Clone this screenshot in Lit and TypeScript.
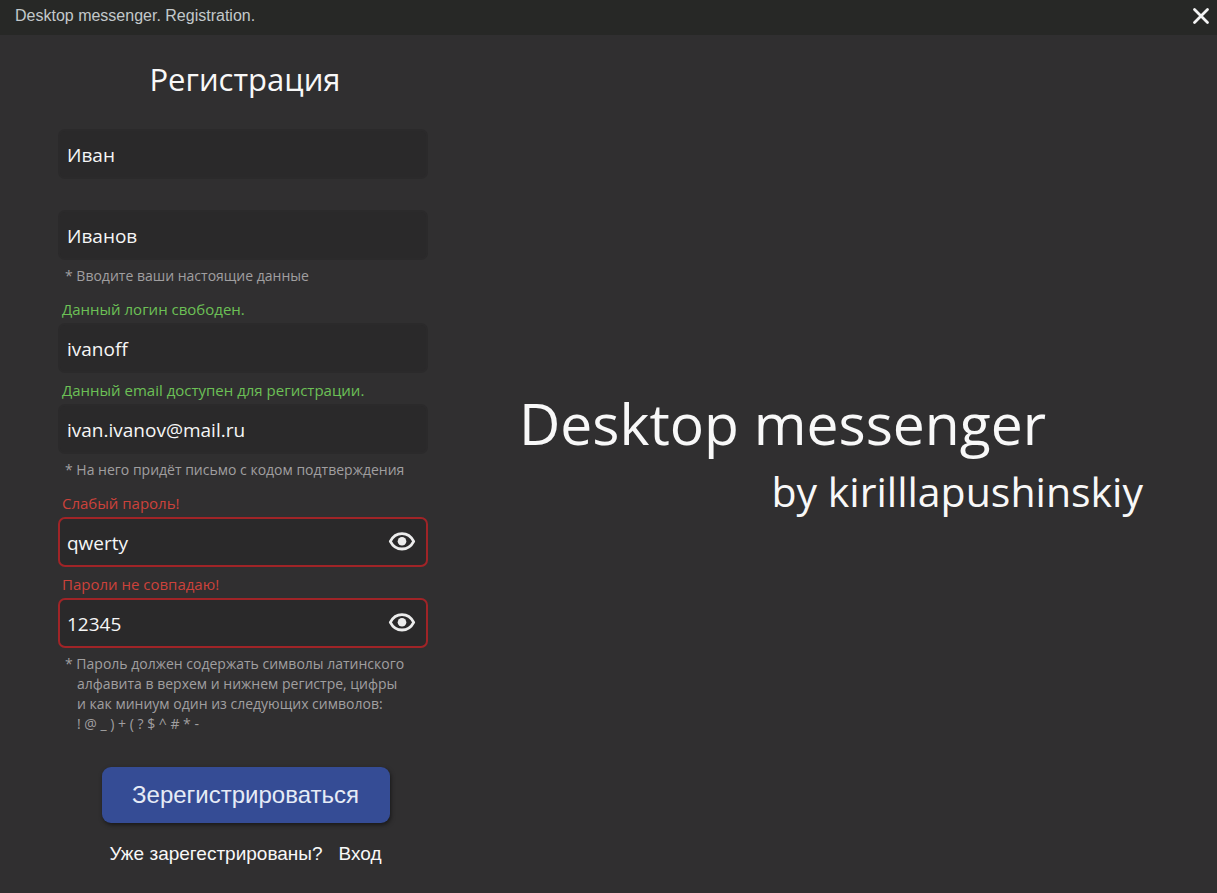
import { LitElement, html, css, svg, nothing } from "lit";
import { customElement, property, state } from "lit/decorators.js";
import { classMap } from "lit/directives/class-map.js";

type Tone = "ok" | "error" | "";

@customElement("form-field")
class FormField extends LitElement {
  @property() label = "";
  @property() name = "";
  @property() value = "";
  @property() message = "";
  @property() tone: Tone = "";
  @property({ attribute: false }) hint: string[] = [];
  @property({ type: Boolean }) secret = false;
  @state() private masked = false;

  static styles = css`
    :host {
      display: block;
    }
    .message {
      display: block;
      height: 26px;
      padding: 4px 4px 0;
      box-sizing: border-box;
      margin-bottom: 5px;
      font-size: 15px;
      line-height: 26px;
      white-space: nowrap;
    }
    .ok {
      color: #6cc056;
    }
    .error {
      color: #cc423b;
    }
    .box {
      display: flex;
      align-items: center;
      height: 50px;
      box-sizing: border-box;
      padding: 0 10px 0 7px;
      border: 2px solid #2b2a2b;
      border-radius: 7px;
      background: #2a292a;
    }
    .invalid {
      border-color: #a02427;
    }
    input {
      flex: 1;
      min-width: 0;
      padding: 2px 0 0;
      border: 0;
      outline: 0;
      background: none;
      color: #f6f6f6;
      font: inherit;
      font-size: 19px;
      line-height: 28px;
    }
    .eye {
      display: flex;
      padding: 0;
      border: 0;
      background: none;
      color: #ececec;
      cursor: pointer;
    }
    .hint {
      margin: 6px 0;
      padding-left: 19px;
      text-indent: -12px;
      color: #a09fa0;
      font-size: 14px;
      line-height: 20px;
      white-space: nowrap;
    }
    .line {
      display: block;
    }
    .line + .line {
      text-indent: 0;
    }
  `;

  render() {
    return html`
      <label
        class=${classMap({ message: true, ok: this.tone === "ok", error: this.tone === "error" })}
        for="control"
        >${this.message}</label
      >
      <div class=${classMap({ box: true, invalid: this.tone === "error" })}>
        <input
          id="control"
          name=${this.name}
          aria-label=${this.label}
          type=${this.masked ? "password" : "text"}
          spellcheck="false"
          .value=${this.value}
        />
        ${this.secret
          ? html`<button
              class="eye"
              type="button"
              aria-label="Показать пароль"
              @click=${() => (this.masked = !this.masked)}
            >
              <svg width="28" height="22" viewBox="0 0 28 22" fill="none" aria-hidden="true">
                ${svg`<path d="M2.300 10.300C4.800 5.500 9 2.600 14 2.600S23.200 5.500 25.700 10.300C23.200 15.100 19 18 14 18S4.800 15.100 2.300 10.300Z" stroke="currentColor" stroke-width="2.800" stroke-linejoin="round"/>
                <circle cx="14" cy="10.300" r="4.300" fill="currentColor"/>`}
              </svg>
            </button>`
          : nothing}
      </div>
      ${this.hint.length
        ? html`<p class="hint">${this.hint.map((l) => html`<span class="line">${l}</span>`)}</p>`
        : nothing}
    `;
  }
}

@customElement("app-root")
class AppRoot extends LitElement {
  static styles = css`
    :host {
      display: flex;
      flex-direction: column;
      min-height: 100vh;
      background: #302f30;
      color: #f8f8f8;
      font-family: "Open Sans", "Noto Sans", sans-serif;
    }
    .titlebar {
      display: flex;
      align-items: center;
      justify-content: space-between;
      height: 35px;
      padding: 0 7px 3px 15px;
      box-sizing: border-box;
      background: #272826;
      color: #c3c9cb;
      font-family: "Liberation Sans", Arial, sans-serif;
      font-size: 16px;
    }
    .close {
      display: flex;
      padding: 0;
      border: 0;
      background: none;
      color: #f4f4f4;
      cursor: pointer;
    }
    main {
      display: flex;
      flex: 1;
      flex-wrap: wrap;
    }
    form {
      flex: 0 1 370px;
      padding: 20px 0 22px 58px;
    }
    h1 {
      margin: 0 0 -5px;
      padding-left: 4px;
      font-size: 31px;
      font-weight: 400;
      line-height: 48px;
      text-align: center;
    }
    .actions {
      display: flex;
      flex-direction: column;
      align-items: center;
      padding: 27px 0 0 5px;
      font-family: "Liberation Sans", Arial, sans-serif;
    }
    .submit {
      width: 288px;
      height: 56px;
      border: 0;
      border-radius: 9px;
      background: #354c95;
      box-shadow: 1px 2px 4px rgba(0, 0, 0, 0.5);
      color: #e6ebf6;
      font: inherit;
      font-size: 24px;
      cursor: pointer;
    }
    .login {
      display: flex;
      gap: 16px;
      margin: 20px 0 0;
      font-size: 19px;
      line-height: 22px;
    }
    a {
      color: inherit;
      text-decoration: none;
    }
    .brand {
      display: flex;
      flex: 1;
      flex-direction: column;
      justify-content: center;
      padding: 0 74px 22px 91px;
      white-space: nowrap;
    }
    .brand p {
      margin: 0;
    }
    .brand .product {
      font-size: 57px;
      line-height: 76px;
    }
    .brand .author {
      font-size: 41px;
      line-height: 60px;
      text-align: right;
    }
  `;

  render() {
    return html`
      <header class="titlebar">
        <span>Desktop messenger. Registration.</span>
        <button class="close" type="button" aria-label="Закрыть">
          <svg width="18" height="18" viewBox="0 0 18 18" fill="none" aria-hidden="true">
            <path d="M2.500 2.500 15.500 15.500M15.500 2.500 2.500 15.500" stroke="currentColor" stroke-width="2.800" stroke-linecap="round" />
          </svg>
        </button>
      </header>
      <main>
        <form @submit=${(e: Event) => e.preventDefault()}>
          <h1>Регистрация</h1>
          <form-field label="Имя" name="first" value="Иван"></form-field>
          <form-field
            label="Фамилия"
            name="last"
            value="Иванов"
            .hint=${["* Вводите ваши настоящие данные"]}
          ></form-field>
          <form-field label="Логин" name="login" value="ivanoff" tone="ok" message="Данный логин свободен."></form-field>
          <form-field
            label="Email"
            name="email"
            value="ivan.ivanov@mail.ru"
            tone="ok"
            message="Данный email доступен для регистрации."
            .hint=${["* На него придёт письмо с кодом подтверждения"]}
          ></form-field>
          <form-field label="Пароль" name="password" value="qwerty" tone="error" message="Слабый пароль!" secret></form-field>
          <form-field
            label="Повтор пароля"
            name="repeat"
            value="12345"
            tone="error"
            message="Пароли не совпадаю!"
            secret
            .hint=${[
              "* Пароль должен содержать символы латинского",
              "алфавита в верхем и нижнем регистре, цифры",
              "и как миниум один из следующих символов:",
              "! @ _ ) + ( ? $ ^ # * -",
            ]}
          ></form-field>
          <div class="actions">
            <button class="submit" type="submit">Зерегистрироваться</button>
            <p class="login"><span>Уже зарегестрированы?</span><a href="#login">Вход</a></p>
          </div>
        </form>
        <section class="brand">
          <p class="product">Desktop messenger</p>
          <p class="author">by kirilllapushinskiy</p>
        </section>
      </main>
    `;
  }
}
